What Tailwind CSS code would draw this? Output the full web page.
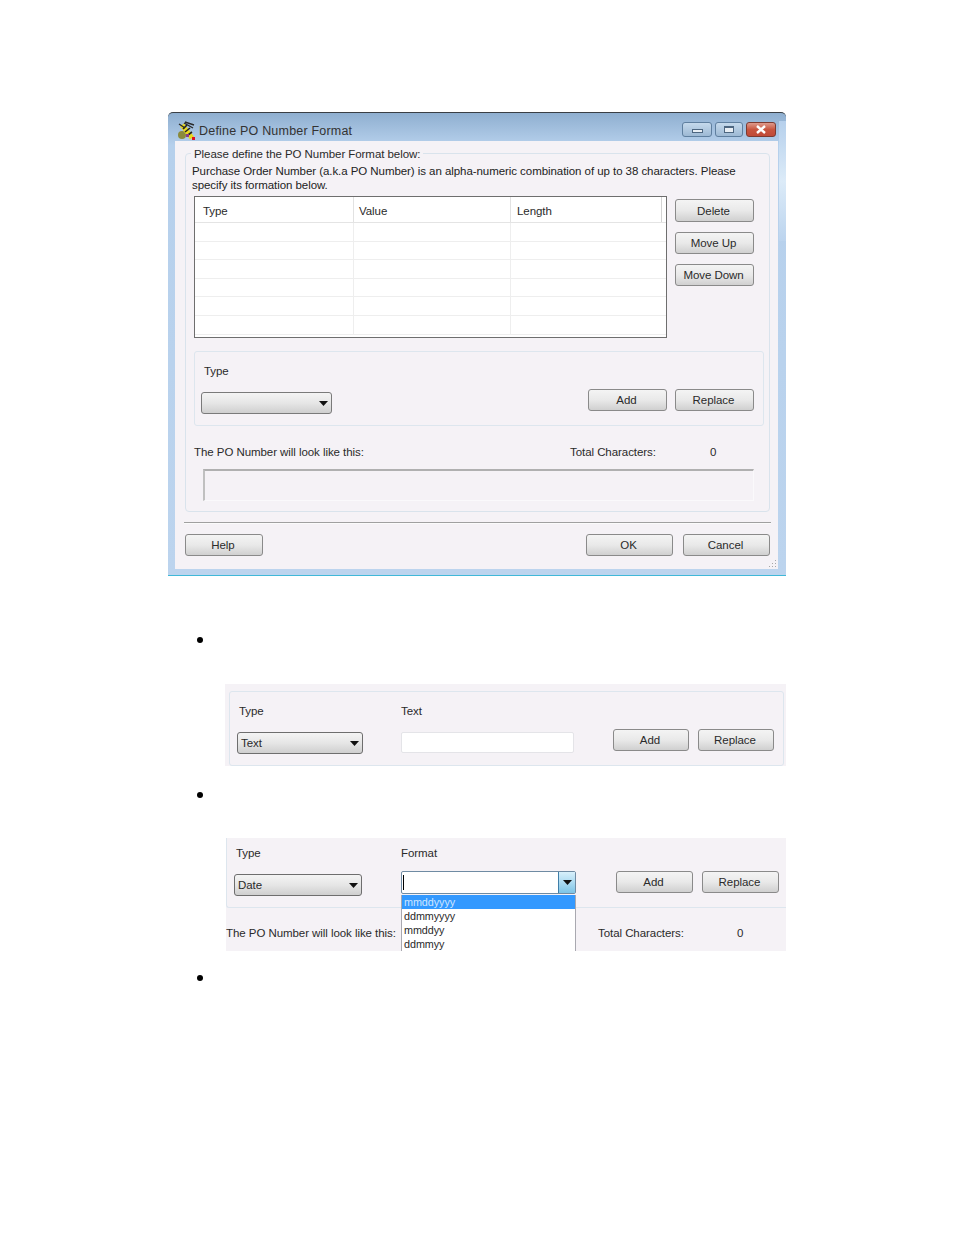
<!DOCTYPE html>
<html lang="en">
<head>
<meta charset="UTF-8">
<title>Define PO Number Format</title>
<script src="https://cdn.jsdelivr.net/npm/@tailwindcss/browser@4"></script>
</head>
<body class="bg-white font-['Liberation_Sans',sans-serif] text-[11.5px] tracking-[-0.06px] leading-[14px] text-[#2a2a2a] h-[1235px] overflow-hidden">
<div class="pt-[112px]">

  <!-- main dialog -->
  <div class="relative ml-[168px] w-[618px] h-[464px] flex flex-col bg-[#bcd4ee] border-t border-t-[#3a3f45] border-b border-b-[#3fb8d8] rounded-t-[5px] bg-linear-to-b from-[#8fafd0] via-[#b6d0ec] via-[7%] to-[#bcd4ee] overflow-hidden">
    <div class="absolute right-0 top-[8px] w-[7px] h-[120px] bg-linear-to-b from-[#b6d0ec] via-[#dcebf8] to-[#bcd4ee]"></div>
    <div class="h-[28px] flex items-center shrink-0 pt-[6px] pl-[9px] pr-[10px]">
      <svg width="19" height="19" viewBox="0 0 19 19" class="shrink-0">
        <ellipse cx="5" cy="14" rx="4" ry="4" fill="#8a8a3c"/>
        <path d="M5 4 L15 17" stroke="#e8d820" stroke-width="5"/>
        <path d="M6 8 L10 4 M8 11 L13 7 M11 14 L15 11" stroke="#222" stroke-width="1.6"/>
        <path d="M2 3 L8 7 M8 1 L17 4 M7 2 L16 7" stroke="#2a2a2a" stroke-width="1.4"/>
        <rect x="15" y="16" width="3" height="3" fill="#e01020"/>
        <rect x="9" y="13" width="3" height="3" fill="#8a3c8a"/>
      </svg>
      <span class="ml-[3px] mt-[1px] text-[12.5px] tracking-[0.2px] text-[#333]">Define PO Number Format</span>
      <div class="ml-auto flex mt-[-1px]">
        <div class="w-[30px] h-[15px] border border-[#5f7f9f] rounded-[3px] bg-linear-to-b from-[#c5d9ec] to-[#9db9d4] flex items-center justify-center">
          <div class="w-[11px] h-[4px] mt-[3px] border border-[#4d6680] bg-[#e8eef4]"></div>
        </div>
        <div class="ml-[3px] w-[28px] h-[15px] border border-[#5f7f9f] rounded-[3px] bg-linear-to-b from-[#c5d9ec] to-[#9db9d4] flex items-center justify-center">
          <div class="w-[10px] h-[7px] border border-t-2 border-[#4d6680] bg-[#e8eef4]"></div>
        </div>
        <div class="ml-[3px] w-[30px] h-[15px] border border-[#7d3a30] rounded-[3px] bg-linear-to-b from-[#dd9a8c] via-[#c8553f] to-[#c04a38] flex items-center justify-center">
          <svg width="12" height="9" viewBox="0 0 12 9"><path d="M2 1 L10 8 M10 1 L2 8" stroke="#fff" stroke-width="2.4"/></svg>
        </div>
      </div>
    </div>

    <div class="relative mx-[7px] w-[603px] h-[428px] bg-[#f5f2f6] pt-[12px]">
      <!-- outer group -->
      <div class="relative ml-[10px] w-[585px] h-[359px] border border-[#d9e3ec] rounded-[4px]">
        <span class="absolute left-[5px] top-[-7px] bg-[#f5f2f6] px-[3px]">Please define the PO Number Format below:</span>
        <p class="pl-[6px] pt-[10px] w-[570px] text-[#222]">Purchase Order Number (a.k.a PO Number) is an alpha-numeric combination of up to 38 characters. Please specify its formation below.</p>
        <div class="flex mt-[4px] ml-[8px]">
          <div class="w-[473px] h-[142px] border border-[#6e6e6e] bg-white flex flex-col">
            <div class="h-[26px] shrink-0 grid grid-cols-[159px_157px_151px_5px] border-b border-[#e4e4e4]">
              <div class="pl-[8px] pt-[7px] border-r border-[#e2e2e2]">Type</div>
              <div class="pl-[5px] pt-[7px] border-r border-[#e2e2e2]">Value</div>
              <div class="pl-[6px] pt-[7px] border-r border-[#d4d4d4]">Length</div>
              <div></div>
            </div>
            <div class="grid grid-cols-[159px_157px_1fr] auto-rows-[18.6px]">
              <div class="border-r border-b border-[#eeeeee]"></div><div class="border-r border-b border-[#eeeeee]"></div><div class="border-b border-[#eeeeee]"></div>
              <div class="border-r border-b border-[#eeeeee]"></div><div class="border-r border-b border-[#eeeeee]"></div><div class="border-b border-[#eeeeee]"></div>
              <div class="border-r border-b border-[#eeeeee]"></div><div class="border-r border-b border-[#eeeeee]"></div><div class="border-b border-[#eeeeee]"></div>
              <div class="border-r border-b border-[#eeeeee]"></div><div class="border-r border-b border-[#eeeeee]"></div><div class="border-b border-[#eeeeee]"></div>
              <div class="border-r border-b border-[#eeeeee]"></div><div class="border-r border-b border-[#eeeeee]"></div><div class="border-b border-[#eeeeee]"></div>
              <div class="border-r border-b border-[#eeeeee]"></div><div class="border-r border-b border-[#eeeeee]"></div><div class="border-b border-[#eeeeee]"></div>
            </div>
          </div>
          <div class="ml-[8px] pt-[3px] flex flex-col gap-[10px]">
            <button class="w-[79px] h-[23px] pr-[2px] border border-[#8a8a8a] rounded-[3px] bg-linear-to-b from-[#f4f4f4] via-[#e9e9e9] to-[#d0d0d0]">Delete</button>
            <button class="w-[79px] h-[22px] pr-[2px] border border-[#8a8a8a] rounded-[3px] bg-linear-to-b from-[#f4f4f4] via-[#e9e9e9] to-[#d0d0d0]">Move Up</button>
            <button class="w-[79px] h-[22px] pr-[2px] border border-[#8a8a8a] rounded-[3px] bg-linear-to-b from-[#f4f4f4] via-[#e9e9e9] to-[#d0d0d0]">Move Down</button>
          </div>
        </div>

        <!-- type group -->
        <div class="mt-[13px] ml-[8px] w-[570px] h-[75px] border border-[#dde6ee] rounded-[3px] relative flex items-start">
          <div class="pl-[6px] pt-[12px]">
            <div class="pl-[3px]">Type</div>
            <div class="mt-[14px] w-[131px] h-[22px] border border-[#7a7a7a] rounded-[3px] bg-linear-to-b from-[#f4f4f4] via-[#e6e6e6] to-[#cfcfcf] flex items-center justify-end pr-[3px]">
              <svg width="9" height="5" viewBox="0 0 9 5"><path d="M0 0 H9 L4.5 5 Z" fill="#111"/></svg>
            </div>
          </div>
          <div class="ml-auto mr-[9px] mt-[37px] flex gap-[8px]">
            <button class="w-[79px] h-[22px] pr-[2px] border border-[#8a8a8a] rounded-[3px] bg-linear-to-b from-[#f4f4f4] via-[#e9e9e9] to-[#d0d0d0]">Add</button>
            <button class="w-[79px] h-[22px] pr-[2px] border border-[#8a8a8a] rounded-[3px] bg-linear-to-b from-[#f4f4f4] via-[#e9e9e9] to-[#d0d0d0]">Replace</button>
          </div>
        </div>

        <div class="flex mt-[19px] ml-[8px]">
          <span class="w-[376px]">The PO Number will look like this:</span>
          <span class="w-[140px]">Total Characters:</span>
          <span>0</span>
        </div>
        <div class="mt-[10px] ml-[17px] w-[551px] h-[32px] border-t-2 border-l-2 border-t-[#b0b0b0] border-l-[#c0c0c0] border-r border-b border-r-[#faf9fb] border-b-[#faf9fb]"></div>
      </div>

      <div class="ml-[9px] mt-[10px] w-[587px] h-[2px] border-t border-t-[#a0a0a0] border-b border-b-[#fbfbfb]"></div>
      <div class="ml-[10px] mt-[10px] flex">
        <button class="w-[78px] h-[22px] pr-[2px] border border-[#8a8a8a] rounded-[3px] bg-linear-to-b from-[#f4f4f4] via-[#e9e9e9] to-[#d0d0d0]">Help</button>
        <button class="ml-auto w-[87px] h-[22px] pr-[2px] border border-[#8a8a8a] rounded-[3px] bg-linear-to-b from-[#f4f4f4] via-[#e9e9e9] to-[#d0d0d0]">OK</button>
        <button class="ml-[10px] mr-[8px] w-[87px] h-[22px] pr-[2px] border border-[#8a8a8a] rounded-[3px] bg-linear-to-b from-[#f4f4f4] via-[#e9e9e9] to-[#d0d0d0]">Cancel</button>
      </div>
      <svg width="9" height="8" viewBox="0 0 9 8" class="absolute right-[1px] bottom-[1px]"><path d="M7 0h1v1H7zM4 3h1v1H4zM7 3h1v1H7zM1 6h1v1H1zM4 6h1v1H4zM7 6h1v1H7z" fill="#a8a8a8"/></svg>
    </div>
  </div>

  <!-- bullet 1 -->
  <div class="ml-[197px] mt-[61px] w-[6px] h-[6px] rounded-full bg-black"></div>

  <!-- text type panel -->
  <div class="ml-[225px] mt-[41px] w-[561px] h-[82px] bg-[#f5f2f6] pt-[7px] pl-[4px]">
    <div class="w-[555px] h-[75px] border border-[#dde6ee] rounded-[3px] flex items-start">
      <div class="pl-[7px] pt-[12px] w-[171px]">
        <div class="pl-[2px]">Type</div>
        <div class="mt-[14px] w-[126px] h-[22px] border border-[#6e6e6e] rounded-[3px] bg-linear-to-b from-[#f4f4f4] via-[#e6e6e6] to-[#cfcfcf] flex items-center justify-between pl-[3px] pr-[3px]">
          <span>Text</span>
          <svg width="9" height="5" viewBox="0 0 9 5"><path d="M0 0 H9 L4.5 5 Z" fill="#111"/></svg>
        </div>
      </div>
      <div class="pt-[12px]">
        <div>Text</div>
        <div class="mt-[14px] w-[173px] h-[21px] border border-[#e4e4e8] rounded-[2px] bg-white"></div>
      </div>
      <div class="ml-auto mr-[9px] mt-[37px] flex gap-[9px]">
        <button class="w-[76px] h-[22px] pr-[2px] border border-[#8a8a8a] rounded-[3px] bg-linear-to-b from-[#f4f4f4] via-[#e9e9e9] to-[#d0d0d0]">Add</button>
        <button class="w-[76px] h-[22px] pr-[2px] border border-[#8a8a8a] rounded-[3px] bg-linear-to-b from-[#f4f4f4] via-[#e9e9e9] to-[#d0d0d0]">Replace</button>
      </div>
    </div>
  </div>

  <!-- bullet 2 -->
  <div class="ml-[197px] mt-[26px] w-[6px] h-[6px] rounded-full bg-black"></div>

  <!-- date type panel -->
  <div class="relative ml-[226px] mt-[40px] w-[560px] h-[113px] bg-[#f5f2f6]">
    <div class="h-[70px] border-l border-b border-[#dde6ee] rounded-bl-[3px] flex items-start">
      <div class="pl-[7px] pt-[8px] w-[174px]">
        <div class="pl-[2px]">Type</div>
        <div class="mt-[14px] w-[128px] h-[22px] border border-[#6e6e6e] rounded-[3px] bg-linear-to-b from-[#f4f4f4] via-[#e6e6e6] to-[#cfcfcf] flex items-center justify-between pl-[3px] pr-[3px]">
          <span>Date</span>
          <svg width="9" height="5" viewBox="0 0 9 5"><path d="M0 0 H9 L4.5 5 Z" fill="#111"/></svg>
        </div>
      </div>
      <div class="pt-[8px]">
        <div>Format</div>
        <div class="mt-[11px] w-[175px] h-[23px] border border-[#6f8ba3] rounded-[2px] bg-white flex">
          <div class="flex-1 flex items-center pl-[1px]"><div class="w-px h-[15px] bg-black"></div></div>
          <div class="w-[17px] border-l border-[#3f7ea8] bg-linear-to-b from-[#d8f0fb] to-[#7cc4e6] flex items-center justify-center">
            <svg width="9" height="5" viewBox="0 0 9 5"><path d="M0 0 H9 L4.5 5 Z" fill="#111"/></svg>
          </div>
        </div>
      </div>
      <div class="ml-auto mr-[7px] mt-[33px] flex gap-[9px]">
        <button class="w-[77px] h-[22px] pr-[2px] border border-[#8a8a8a] rounded-[3px] bg-linear-to-b from-[#f4f4f4] via-[#e9e9e9] to-[#d0d0d0]">Add</button>
        <button class="w-[77px] h-[22px] pr-[2px] border border-[#8a8a8a] rounded-[3px] bg-linear-to-b from-[#f4f4f4] via-[#e9e9e9] to-[#d0d0d0]">Replace</button>
      </div>
    </div>
    <div class="flex mt-[18px]">
      <span class="w-[372px]">The PO Number will look like this:</span>
      <span class="w-[139px]">Total Characters:</span>
      <span>0</span>
    </div>
    <!-- open dropdown -->
    <div class="absolute left-[175px] top-[57px] w-[175px] h-[56px] bg-white border-l border-r border-[#a9a9b0] text-[10.8px]">
      <div class="h-[14px] pl-[2px] bg-[#3399ff] text-[#cfe6ff]">mmddyyyy</div>
      <div class="h-[14px] pl-[2px]">ddmmyyyy</div>
      <div class="h-[14px] pl-[2px]">mmddyy</div>
      <div class="h-[14px] pl-[2px]">ddmmyy</div>
    </div>
  </div>

  <!-- bullet 3 -->
  <div class="ml-[197px] mt-[24px] w-[6px] h-[6px] rounded-full bg-black"></div>
</div>
</body>
</html>
